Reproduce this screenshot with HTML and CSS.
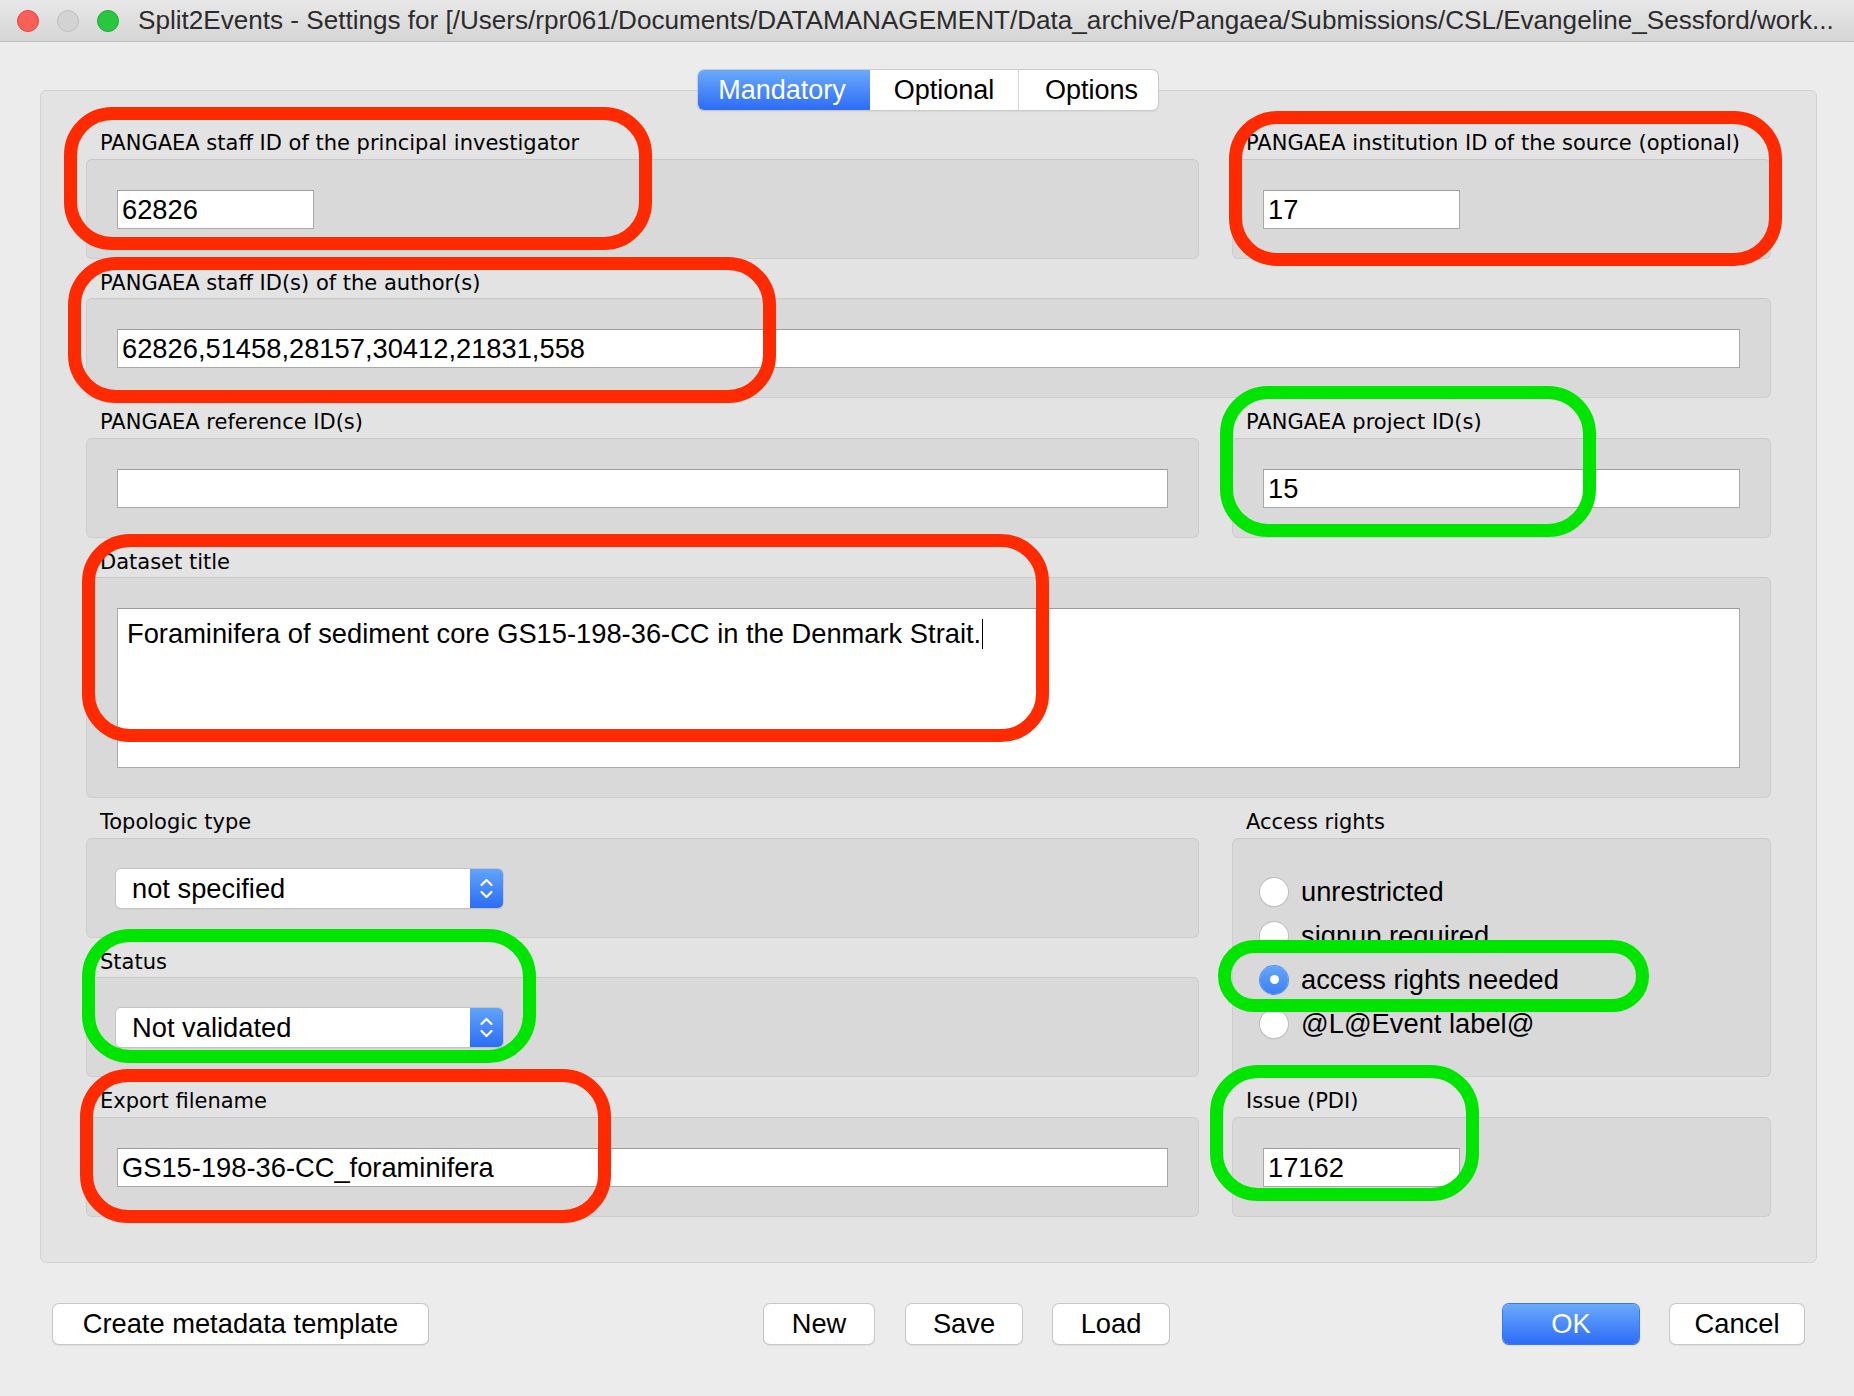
FILE: index.html
```html
<!DOCTYPE html>
<html>
<head>
<meta charset="utf-8">
<link rel="stylesheet" href="styles.css">
</head>
<body>
<div class="window">
  <header class="titlebar">
    <div class="lights">
      <span class="light red"></span>
      <span class="light gray"></span>
      <span class="light green"></span>
    </div>
    <div class="title">Split2Events - Settings for [/Users/rpr061/Documents/DATAMANAGEMENT/Data_archive/Pangaea/Submissions/CSL/Evangeline_Sessford/work...</div>
  </header>

  <main class="content">
    <nav class="tabs">
      <div class="tab tab-active tab-mandatory">Mandatory</div>
      <div class="tab tab-optional">Optional</div>
      <div class="tab tab-options">Options</div>
    </nav>

    <section class="panel">
      <div class="group">
        <div class="label">PANGAEA staff ID of the principal investigator</div>
        <div class="box"><div class="field field-short">62826</div></div>
      </div>
      <div class="group">
        <div class="label">PANGAEA institution ID of the source (optional)</div>
        <div class="box"><div class="field field-short">17</div></div>
      </div>

      <div class="group span2">
        <div class="label">PANGAEA staff ID(s) of the author(s)</div>
        <div class="box"><div class="field">62826,51458,28157,30412,21831,558</div></div>
      </div>

      <div class="group">
        <div class="label">PANGAEA reference ID(s)</div>
        <div class="box"><div class="field"></div></div>
      </div>
      <div class="group">
        <div class="label">PANGAEA project ID(s)</div>
        <div class="box"><div class="field">15</div></div>
      </div>

      <div class="group span2">
        <div class="label">Dataset title</div>
        <div class="box"><div class="textarea">Foraminifera of sediment core GS15-198-36-CC in the Denmark Strait.<span class="caret"></span></div></div>
      </div>

      <div class="group">
        <div class="label">Topologic type</div>
        <div class="box">
          <div class="select">
            <span class="select-text">not specified</span>
            <span class="stepper">
              <svg width="33" height="39" viewBox="0 0 33 39"><path d="M11.5 16 L16.5 11 L21.5 16" fill="none" stroke="#fff" stroke-width="2.2" stroke-linecap="round" stroke-linejoin="round"/><path d="M11.5 23 L16.5 28 L21.5 23" fill="none" stroke="#fff" stroke-width="2.2" stroke-linecap="round" stroke-linejoin="round"/></svg>
            </span>
          </div>
        </div>
      </div>
      <div class="group rowspan2">
        <div class="label">Access rights</div>
        <div class="box box-radios">
          <div class="radio-row"><span class="radio"></span><span>unrestricted</span></div>
          <div class="radio-row"><span class="radio"></span><span>signup required</span></div>
          <div class="radio-row"><span class="radio radio-on"></span><span>access rights needed</span></div>
          <div class="radio-row"><span class="radio"></span><span>@L@Event label@</span></div>
        </div>
      </div>

      <div class="group">
        <div class="label">Status</div>
        <div class="box">
          <div class="select">
            <span class="select-text">Not validated</span>
            <span class="stepper">
              <svg width="33" height="39" viewBox="0 0 33 39"><path d="M11.5 16 L16.5 11 L21.5 16" fill="none" stroke="#fff" stroke-width="2.2" stroke-linecap="round" stroke-linejoin="round"/><path d="M11.5 23 L16.5 28 L21.5 23" fill="none" stroke="#fff" stroke-width="2.2" stroke-linecap="round" stroke-linejoin="round"/></svg>
            </span>
          </div>
        </div>
      </div>

      <div class="group">
        <div class="label">Export filename</div>
        <div class="box"><div class="field">GS15-198-36-CC_foraminifera</div></div>
      </div>
      <div class="group">
        <div class="label">Issue (PDI)</div>
        <div class="box"><div class="field field-short">17162</div></div>
      </div>
    </section>

    <div class="buttons">
      <button class="btn btn-create">Create metadata template</button>
      <button class="btn btn-new">New</button>
      <button class="btn btn-save">Save</button>
      <button class="btn btn-load">Load</button>
      <button class="btn btn-ok">OK</button>
      <button class="btn btn-cancel">Cancel</button>
    </div>
  </main>

  <div class="mark red-mark m-r1"></div>
  <div class="mark red-mark m-r2"></div>
  <div class="mark red-mark m-r3"></div>
  <div class="mark red-mark m-r4"></div>
  <div class="mark red-mark m-r5"></div>
  <div class="mark green-mark m-g1"></div>
  <div class="mark green-mark m-g2"></div>
  <div class="mark green-mark m-g3"></div>
  <div class="mark green-mark m-g4"></div>
</div>
</body>
</html>
```

FILE: styles.css
```css
* { box-sizing: border-box; }
html, body { margin: 0; padding: 0; }
body {
  width: 1854px;
  height: 1396px;
  overflow: hidden;
  background: #ececec;
  font-family: "Liberation Sans", Arial, sans-serif;
  color: #000;
}
.window {
  position: relative;
  width: 1854px;
  height: 1396px;
  background: #ececec;
}

/* title bar */
.titlebar {
  height: 42px;
  display: flex;
  align-items: center;
  padding-left: 17px;
  background: linear-gradient(#e8e8e8, #d5d5d5);
  border-bottom: 1px solid #bdbdbd;
}
.lights { display: flex; gap: 18px; }
.light {
  width: 22px;
  height: 22px;
  border-radius: 50%;
  display: block;
}
.light.red { background: #fc5f57; border: 1px solid #e0443e; }
.light.gray { background: #d3d3d3; border: 1px solid #bfbfbf; }
.light.green { background: #29c73f; border: 1px solid #1ea830; }
.title {
  margin-left: 19px;
  font-size: 26.1px;
  color: #2c2c2c;
  white-space: nowrap;
  overflow: hidden;
  width: 1710px;
}

/* content */
.content { padding: 28px 37px 0 40px; }

.tabs {
  position: relative;
  z-index: 1;
  display: flex;
  width: 460px;
  height: 40px;
  margin-left: 658px;
  background: #fff;
  border-radius: 6px;
  box-shadow: 0 0 0 1px #cbcbcb, 0 1px 2px rgba(0,0,0,0.18);
}
.tab {
  display: flex;
  align-items: center;
  justify-content: center;
  font-size: 27px;
  color: #000;
}
.tab-mandatory { width: 172px; padding-right: 4px; }
.tab-optional { width: 149px; border-right: 1px solid #d6d6d6; }
.tab-options { width: 139px; padding-left: 6px; }
.tab-active {
  color: #fff;
  background: linear-gradient(#6aaafb, #2d6cf6);
  border-radius: 6px 0 0 6px;
}

.panel {
  margin-top: -20px;
  background: #e3e3e3;
  border: 1px solid #d2d2d2;
  border-radius: 6px;
  padding: 28px 45px 45px 45px;
  display: grid;
  grid-template-columns: 1113px 539px;
  column-gap: 33px;
}
.group { display: flex; flex-direction: column; }
.span2 { grid-column: 1 / span 2; }
.rowspan2 { grid-row: span 2; }

.label {
  height: 39.5px;
  padding: 12px 0 0 14px;
  line-height: 24px;
  font-family: "DejaVu Sans", "Liberation Sans", sans-serif;
  font-size: 21px;
  color: #000;
  white-space: nowrap;
}
.box {
  flex: 1;
  background: #d9d9d9;
  border: 1px solid #cdcdcd;
  border-top-color: #c8c8c8;
  border-radius: 6px;
  padding: 30px 30px 29px 30px;
}

.field {
  height: 39px;
  background: #fff;
  border: 1px solid #a9a9a9;
  border-top-color: #9c9c9c;
  font-size: 27.3px;
  line-height: 37px;
  padding-left: 4px;
  white-space: nowrap;
}
.field-short { width: 197px; }

.textarea {
  height: 160px;
  background: #fff;
  border: 1px solid #a9a9a9;
  border-top-color: #9c9c9c;
  font-size: 27.3px;
  line-height: 32px;
  padding: 9px 9px;
}
.caret {
  display: inline-block;
  width: 1px;
  height: 30px;
  background: #000;
  vertical-align: -6px;
  margin-left: 1px;
}

.select {
  display: flex;
  width: 387px;
  height: 39px;
  margin-left: -1px;
  background: #fff;
  border-radius: 5px;
  box-shadow: 0 0 0 1px #c4c4c4, 0 1px 1px rgba(0,0,0,0.2);
  overflow: hidden;
}
.select-text {
  flex: 1;
  font-size: 27.3px;
  line-height: 39px;
  padding-left: 16px;
}
.stepper {
  width: 33px;
  height: 39px;
  background: linear-gradient(#62a3fa, #2b6ef5);
  display: block;
}
.stepper svg { display: block; }

.box-radios { padding: 31px 27px 0 27px; }
.radio-row {
  height: 44px;
  display: flex;
  align-items: center;
  font-size: 27.3px;
}
.radio {
  width: 28px;
  height: 28px;
  border-radius: 50%;
  background: #fff;
  box-shadow: 0 0 0 1px #bdbdbd, 0 1px 1px rgba(0,0,0,0.15);
  margin-right: 13px;
  flex: none;
  position: relative;
}
.radio-on {
  background: linear-gradient(#64a6fb, #3a80f6);
  box-shadow: 0 0 0 1px #4f8ef4;
}
.radio-on::after {
  content: "";
  position: absolute;
  left: 9.5px;
  top: 9.5px;
  width: 9px;
  height: 9px;
  border-radius: 50%;
  background: #fff;
}

/* bottom buttons */
.buttons {
  display: flex;
  align-items: center;
  margin-top: 41px;
  padding-left: 13px;
}
.btn {
  height: 40px;
  background: #fff;
  border: none;
  border-radius: 6px;
  box-shadow: 0 0 0 1px #c8c8c8, 0 1px 2px rgba(0,0,0,0.2);
  font-family: "Liberation Sans", Arial, sans-serif;
  font-size: 27.3px;
  color: #000;
  padding: 0;
}
.btn-create { width: 375px; }
.btn-new { width: 110px; margin-left: 336px; }
.btn-save { width: 116px; margin-left: 32px; }
.btn-load { width: 116px; margin-left: 31px; }
.btn-ok {
  width: 136px;
  margin-left: 334px;
  color: #fff;
  background: linear-gradient(#6aaafb, #2d6cf6);
  box-shadow: 0 0 0 1px #3a78f0, 0 1px 2px rgba(0,0,0,0.2);
}
.btn-cancel { width: 134px; margin-left: 31px; }

/* annotation overlays */
.mark {
  position: absolute;
  border: 13px solid;
  border-radius: 48px;
  pointer-events: none;
}
.red-mark { border-color: #ff2a00; }
.green-mark { border-color: #00e500; }
.m-r1 { left: 64px; top: 107px; width: 588px; height: 143px; }
.m-r2 { left: 1229px; top: 111px; width: 553px; height: 155px; }
.m-r3 { left: 68px; top: 257px; width: 708px; height: 146px; }
.m-r4 { left: 82px; top: 534px; width: 967px; height: 208px; }
.m-r5 { left: 80px; top: 1069px; width: 531px; height: 154px; }
.m-g1 { left: 1220px; top: 386px; width: 376px; height: 151px; }
.m-g2 { left: 82px; top: 929px; width: 454px; height: 134px; }
.m-g3 { left: 1218px; top: 940px; width: 431px; height: 72px; border-radius: 36px; }
.m-g4 { left: 1210px; top: 1065px; width: 269px; height: 136px; }
```
